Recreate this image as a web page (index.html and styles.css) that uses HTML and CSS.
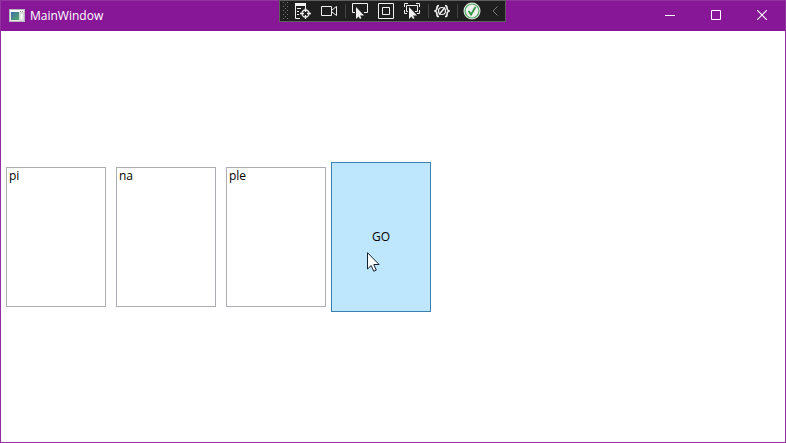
FILE: index.html
```html
<!DOCTYPE html>
<html lang="en">
<head>
<meta charset="utf-8">
<title>MainWindow</title>
<link rel="stylesheet" href="styles.css">
</head>
<body>
<div class="window">
  <header class="titlebar">
    <svg class="app-icon" width="16" height="14" viewBox="0 0 16 14" aria-hidden="true">
      <defs><linearGradient id="pane" x2="1" y2="1"><stop stop-color="#3c6fa8"/><stop offset="1" stop-color="#55a66a"/></linearGradient></defs>
      <rect x="0.5" y="0.5" width="15" height="12" fill="#e9ebe9" stroke="#b9b4bd"/>
      <rect x="1" y="1" width="14" height="2" fill="#f8f8f8"/>
      <rect x="2" y="3" width="8" height="8" fill="url(#pane)"/>
      <rect x="11" y="4" width="3" height="7" fill="#fff" stroke="#c6cec8"/>
      <path d="M11 2.500h1M13 2.500h1" stroke="#8a9a90"/>
    </svg>
    <h1 class="title">MainWindow</h1>
    <div class="captions">
      <button class="caption" aria-label="Minimize"><svg width="10" height="10"><path d="M0 5.500h10" stroke="#fff"/></svg></button>
      <button class="caption" aria-label="Maximize"><svg width="10" height="10"><path d="M.5.500h9v9h-9z" stroke="#fff" fill="none"/></svg></button>
      <button class="caption" aria-label="Close"><svg width="10" height="10"><path d="M0 0l10 10M10 0L0 10" stroke="#fff" stroke-width="1.100"/></svg></button>
    </div>
  </header>

  <div class="debug-bar" role="toolbar" aria-label="Debug tools">
    <span class="grip"></span>
    <button class="tool" aria-label="Go to live visual tree">
      <svg width="18" height="18" viewBox="0 0 18 18" fill="none" stroke="#f1f1f1">
        <path d="M1 1h11v3H1z" fill="#f1f1f1" stroke="none"/>
        <path d="M1.500 4v12.500H6M3 6.500h4M3 9.500h2M3 12.500h2M11.500 4v2"/>
        <circle cx="11.500" cy="11.500" r="3.500" stroke-width="1.300"/>
        <path d="M11.500 6v4M11.500 13v4M6 11.500h4M13 11.500h4" stroke-width="1.300"/>
      </svg>
    </button>
    <button class="tool" aria-label="Record">
      <svg width="18" height="18" viewBox="0 0 18 18" fill="none" stroke="#f1f1f1">
        <path d="M1.500 4.500h10v9h-10zM12 8l4.500-3.500v9L12 10"/>
      </svg>
    </button>
    <span class="separator"></span>
    <button class="tool" aria-label="Select element">
      <svg width="18" height="18" viewBox="0 0 18 18" fill="none" stroke="#f1f1f1">
        <path d="M4 10.500H1.500v-9h15v9H13"/>
        <path d="M5 5v12l2.500-2.500 1.500 2.500 1.500-1-1.500-2.500h4z" fill="#f1f1f1" stroke="none"/>
      </svg>
    </button>
    <button class="tool" aria-label="Display layout adorners">
      <svg width="18" height="18" viewBox="0 0 18 18" fill="none" stroke="#f1f1f1">
        <path d="M1.500 1.500h15v15h-15zM5.500 5.500h7v7h-7z"/>
      </svg>
    </button>
    <button class="tool" aria-label="Track focused element">
      <svg width="18" height="18" viewBox="0 0 18 18" fill="none" stroke="#f1f1f1">
        <path d="M1.500 5V1.500H5M13 1.500h3.500V5M1.500 8v3.500H4M16.500 8v3.500H14M5 9.500H3.500v-6h11v6H12"/>
        <path d="M6 5v12l2.500-2.500 1.500 2.500 1.500-1-1.500-2.500h4z" fill="#f1f1f1" stroke="none"/>
      </svg>
    </button>
    <span class="separator"></span>
    <button class="tool tool-narrow" aria-label="Binding failures">
      <svg width="16" height="18" viewBox="0 0 16 18" fill="none" stroke="#f1f1f1" stroke-width="1.700">
        <path d="M5 3.500C3 3.500 3 4.500 3 6S2.500 8.500 1 9c1.500.5 2 1 2 3s0 2.500 2 2.500M11 3.500c2 0 2 1 2 2.500s.5 2.500 2 3c-1.500.5-2 1-2 3s0 2.500-2 2.500"/>
        <circle cx="8" cy="9" r="3.500" stroke-width="1.200"/>
        <path d="M5 12.500l6-7" stroke-width="1.500"/>
      </svg>
    </button>
    <span class="separator"></span>
    <button class="tool" aria-label="Hot Reload available">
      <svg width="18" height="18" viewBox="0 0 18 18" fill="none">
        <circle cx="9" cy="9" r="8.500" fill="#f1f1f1"/>
        <circle cx="9" cy="9" r="7" stroke="#4ba65a" stroke-width="1.200"/>
        <path d="M5.500 9l2.500 3.500L12.500 5" stroke="#329543" stroke-width="1.800"/>
      </svg>
    </button>
    <button class="tool tool-collapse" aria-label="Collapse">
      <svg width="6" height="10" viewBox="0 0 6 10" fill="none"><path d="M5.500.500L1 5l4.500 4.500" stroke="#7a7a7a"/></svg>
    </button>
  </div>

  <main class="content">
    <input class="box" type="text" value="pi" aria-label="First part">
    <input class="box" type="text" value="na" aria-label="Second part">
    <input class="box" type="text" value="ple" aria-label="Third part">
    <button class="go">GO
      <svg class="pointer" width="13" height="20" viewBox="0 0 13 20" aria-hidden="true"><path d="M.5.700v16.300l3.700-3.500 2.500 5.700 2.600-1.100-2.500-5.600h5.300z" fill="#fff" stroke="#152030"/></svg>
    </button>
  </main>
</div>
</body>
</html>
```
FILE: styles.css
```css
* {
  box-sizing: border-box;
}

body {
  margin: 0;
  font: 12px/16px "Open Sans", "Noto Sans", sans-serif;
  color: #000;
}

button {
  margin: 0;
  padding: 0;
  border: 0;
  background: none;
  font: inherit;
  color: inherit;
}

svg {
  display: block;
  flex: none;
}

.window {
  position: relative;
  display: flex;
  flex-direction: column;
  min-height: 100vh;
  border: 1px solid #9331a2;
  background: #fff;
}

.titlebar {
  display: flex;
  align-items: center;
  height: 30px;
  padding-left: 8px;
  background: #881798;
  color: #fff;
}

.title {
  flex: 1;
  margin: 0 0 0 5px;
  font-size: 12px;
  font-weight: 400;
}

.captions {
  display: flex;
  align-self: stretch;
  padding-bottom: 2px;
}

.caption {
  display: flex;
  align-items: center;
  justify-content: center;
  width: 46px;
}

.debug-bar {
  position: absolute;
  top: -1px;
  left: 0;
  right: 1px;
  display: flex;
  width: 227px;
  height: 22px;
  margin: 0 auto;
  border: 1px solid #5f5f5f;
  background: #1f1f20;
}

.grip {
  width: 6px;
  margin: 1px 1px 1px 3px;
  background-image:
    conic-gradient(from 270deg at 1px 1px, #777 90deg, transparent 0),
    conic-gradient(from 270deg at 1px 1px, #777 90deg, transparent 0);
  background-position: 0 0, 2px 2px;
  background-size: 4px 4px;
}

.tool {
  display: flex;
  align-items: center;
  justify-content: center;
  width: 26px;
}

.tool-narrow {
  width: 24px;
}

.tool-collapse {
  flex: 1;
}

.separator {
  width: 5px;
  padding: 3px 1px 3px 3px;
  background: #444 content-box;
}

.content {
  display: flex;
  flex: 1;
  align-items: center;
}

.box {
  width: 100px;
  height: 140px;
  margin: 0 5px;
  padding: 0 2px 122px;
  border: 1px solid #abadb3;
  background: #fff;
  font: inherit;
  color: inherit;
}

.go {
  position: relative;
  width: 100px;
  height: 150px;
  border: 1px solid #3c7fb1;
  background: #bee6fd;
}

.pointer {
  position: absolute;
  top: 89px;
  left: 35px;
}
```
